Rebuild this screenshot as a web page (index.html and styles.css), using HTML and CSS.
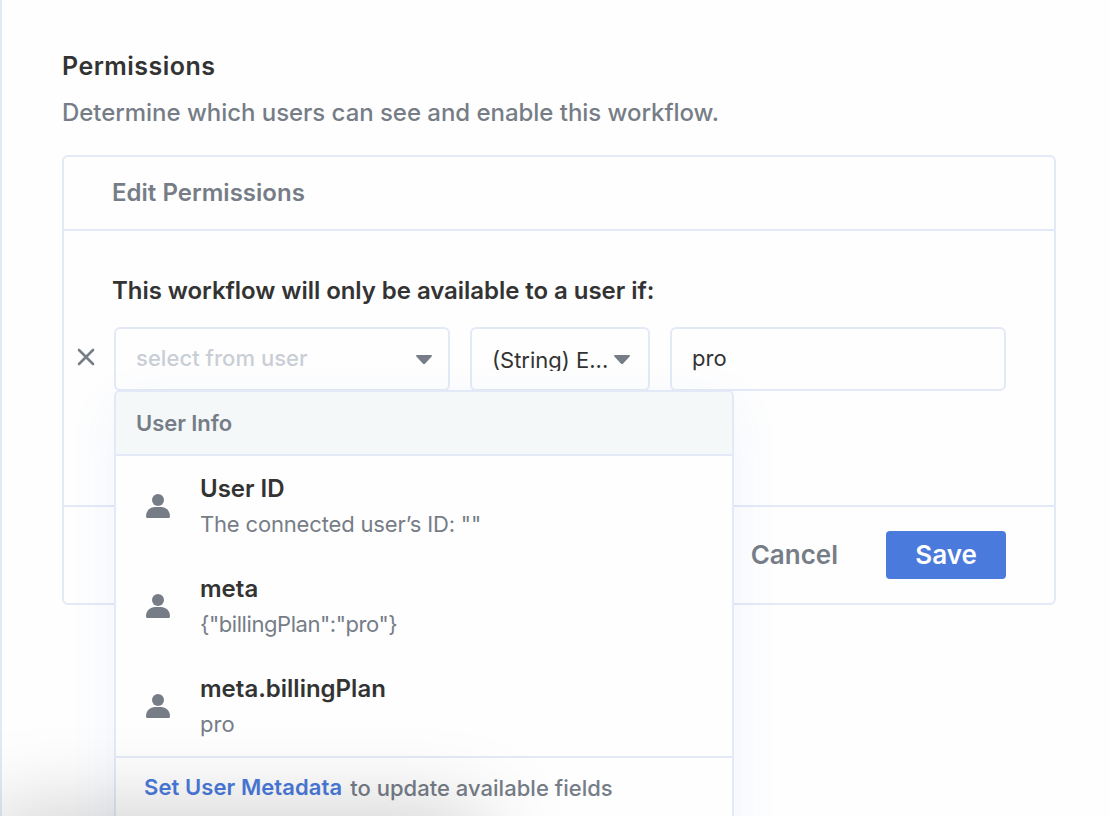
FILE: index.html
```html
<!DOCTYPE html>
<html lang="en">
<head>
<meta charset="utf-8">
<title>Permissions</title>
<link rel="stylesheet" href="styles.css">
</head>
<body>
<svg class="defs" width="0" height="0" aria-hidden="true">
  <symbol id="person" viewBox="0 0 24 24"><circle cx="12" cy="6" r="6"/><path d="M0 22.2C0 16.5 4.4 13 9 13h6c4.6 0 9 3.500 9 9.200 0 1.200-.6 1.800-1.800 1.800H1.800C.6 24 0 23.400 0 22.200z"/></symbol>
  <symbol id="caret" viewBox="0 0 16 10"><path d="M1 0h14c1 0 1.300.8.600 1.500L9.200 8.400c-.8.800-1.600.8-2.400 0L.4 1.500C-.3.800 0 0 1 0z"/></symbol>
</svg>
<main class="page">
  <h1 class="title">Permissions</h1>
  <p class="description">Determine which users can see and enable this workflow.</p>
  <section class="card">
    <header class="card-header">Edit Permissions</header>
    <div class="card-body">
      <h2 class="prompt">This workflow will only be available to a user if:</h2>
      <div class="rule">
        <button class="remove" aria-label="Remove"><svg width="18" height="18" viewBox="0 0 18 18"><path d="M2 2l14 14M16 2L2 16"/></svg></button>
        <div class="field field-wide">
          <span class="placeholder">select from user</span>
          <svg class="caret" width="16" height="10"><use href="#caret"/></svg>
          <div class="menu">
            <div class="menu-header">User Info</div>
            <ul class="options">
              <li class="option"><svg class="person" width="24" height="24"><use href="#person"/></svg><div><div class="name">User ID</div><div class="value value-id">The connected user’s ID: ""</div></div></li>
              <li class="option"><svg class="person" width="24" height="24"><use href="#person"/></svg><div><div class="name">meta</div><div class="value value-meta">{"billingPlan":"pro"}</div></div></li>
              <li class="option"><svg class="person" width="24" height="24"><use href="#person"/></svg><div><div class="name">meta.billingPlan</div><div class="value">pro</div></div></li>
            </ul>
            <div class="menu-footer"><a class="link">Set User Metadata</a><span class="hint">to update available fields</span></div>
          </div>
        </div>
        <div class="field field-operator"><span class="operator">(String) E...</span><svg class="caret" width="16" height="10"><use href="#caret"/></svg></div>
        <div class="field field-wide"><span class="entry">pro</span></div>
      </div>
    </div>
    <footer class="card-footer"><button class="cancel">Cancel</button><button class="save">Save</button></footer>
  </section>
</main>
<div class="status-shade"></div>
</body>
</html>
```

FILE: styles.css
```css
* { box-sizing: border-box; }
body { margin: 0; height: 816px; overflow: hidden; background: #fefefe; color: #333; font-family: Inter, sans-serif; }
h1, h2, p, ul { margin: 0; padding: 0; }
button { border: 0; padding: 0; background: none; font: inherit; }
.defs { display: block; position: absolute; }
.page { height: 816px; overflow: hidden; border-left: 2px solid #e3e9f7; padding: 50px 54px 0 60px; }
.title { font-size: 25px; line-height: 32px; font-weight: 600; letter-spacing: 0.48px; }
.description { margin-top: 15px; font-size: 24px; line-height: 32px; font-weight: 450; letter-spacing: -0.04px; color: #767d87; }
.card { margin-top: 26px; height: 450px; border: 2px solid #e3e9f7; border-radius: 6px; display: flex; flex-direction: column; }
.card-header { height: 74px; flex: none; padding-left: 48px; border-bottom: 2px solid #e3e9f7; font-size: 24px; font-weight: 600; line-height: 72px; letter-spacing: 0.02px; color: #767d87; }
.card-body { flex: 1; padding-top: 44px; }
.prompt { padding-left: 48px; font-size: 24px; line-height: 32px; font-weight: 600; letter-spacing: -0.05px; }
.rule { display: flex; align-items: center; margin-top: 20px; padding-left: 13px; }
.remove { width: 18px; height: 18px; margin: 0 19px 5px 0; }
.remove svg { display: block; fill: none; stroke: #767d87; stroke-width: 2.6; stroke-linecap: round; }
.field { position: relative; height: 64px; border: 2px solid #e3e9f7; border-radius: 6px; padding: 0 16px 2px 20px; display: flex; align-items: center; justify-content: space-between; font-size: 22px; line-height: 30px; }
.field-wide { width: 336px; }
.field-operator { width: 180px; margin: 0 20px; padding-right: 18px; }
.placeholder { color: #c9ced6; font-weight: 450; letter-spacing: 0.04px; }
.caret { fill: #767d87; margin-top: 3px; }
.operator { height: 24px; margin-top: 2px; overflow: hidden; line-height: 26px; white-space: nowrap; }
.menu { position: absolute; z-index: 2; left: -2px; top: 61px; width: 620px; height: 480px; border: 2px solid #e3e9f7; border-radius: 6px; background: #fefefe; box-shadow: 0 16px 48px rgba(80, 135, 220, 0.085); }
.menu-header { height: 64px; padding-left: 20px; border-bottom: 2px solid #e3e9f7; border-radius: 4px 4px 0 0; background: #f4f8f9; color: #767d87; font-weight: 600; line-height: 62px; letter-spacing: -0.05px; }
.options { list-style: none; height: 300px; }
.option { height: 100px; display: flex; align-items: center; gap: 30px; padding-left: 30px; }
.person { fill: #767d87; }
.name { margin-top: 1px; font-size: 24px; line-height: 34px; font-weight: 600; }
.value { margin-top: 1px; font-size: 22px; line-height: 34px; color: #767d87; }
.value-id { letter-spacing: -0.17px; }
.value-meta { letter-spacing: -0.43px; }
.menu-footer { display: flex; gap: 8px; padding: 14px 0 0 28px; border-top: 2px solid #e3e9f7; line-height: 32px; }
.link { color: #4a7adb; font-weight: 600; letter-spacing: 0.08px; line-height: 30px; }
.hint { color: #767d87; font-weight: 450; letter-spacing: 0.02px; }
.card-footer { height: 98px; flex: none; display: flex; justify-content: flex-end; align-items: center; gap: 48px; padding-right: 48px; border-top: 2px solid #e3e9f7; font-size: 26px; font-weight: 600; }
.cancel { padding-bottom: 2px; color: #767d87; }
.save { width: 120px; height: 48px; padding-bottom: 2px; border-radius: 4px; background: #4a7adb; color: #fff; }
.status-shade { position: fixed; z-index: 5; left: -10px; top: 822px; width: 490px; height: 60px; box-shadow: 0 0 90px rgba(0, 0, 0, 0.27); pointer-events: none; }
```
